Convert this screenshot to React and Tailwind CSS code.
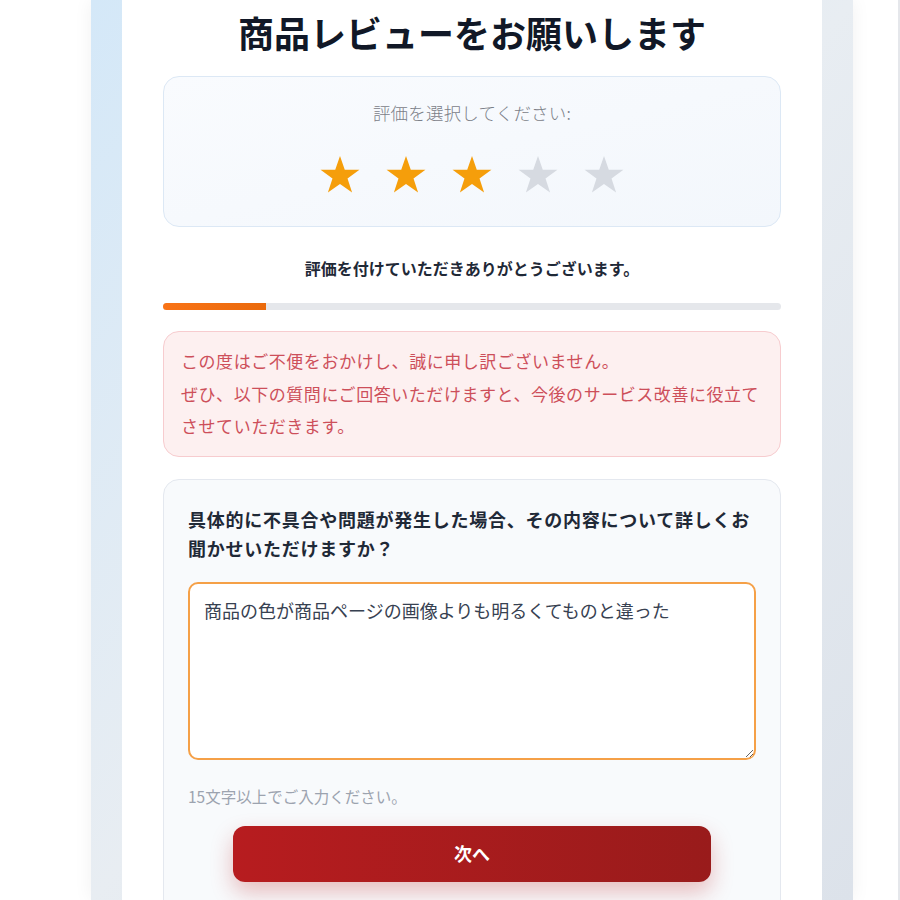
import React from "react";

const font = { fontFamily: '"Noto Sans CJK JP", "Noto Sans", sans-serif' };

function Star({ filled }) {
  return (
    <svg width="44" height="44" viewBox="0 0 24 24" aria-hidden="true">
      <polygon
        points="12,1.6 14.6,9.2 22.6,9.2 16.1,13.9 18.6,21.6 12,16.9 5.4,21.6 7.9,13.9 1.4,9.2 9.4,9.2"
        fill={filled ? "#f59e0b" : "#d6dae1"}
      />
    </svg>
  );
}

export default function App() {
  const rating = 3;
  return (
    <div className="flex h-[900px] overflow-hidden bg-white" style={font}>
      <div className="ml-[91px] w-[762px] shrink-0 bg-gradient-to-br from-[#d4e8f8] via-[#e8edf2] to-[#dce2ea] px-[31px] shadow-[0_0_18px_rgba(15,23,42,0.06)]">
        <div className="h-full bg-white px-[41px] pt-[10px]">
          <h1 className="text-center text-[36px] font-bold leading-[44px] text-[#111827]">
            商品レビューをお願いします
          </h1>

          <div className="mt-[22px] rounded-2xl border border-[#dce8f5] bg-gradient-to-br from-[#f9fbfe] to-[#f3f7fc] pt-[24px] pb-[29px]">
            <p className="text-center text-[17.5px] font-light leading-[24px] tracking-[0.2px] text-[#7b8088]">
              評価を選択してください:
            </p>
            <div className="mt-[28px] flex justify-center gap-[22px]">
              {[1, 2, 3, 4, 5].map((n) => (
                <Star key={n} filled={n <= rating} />
              ))}
            </div>
          </div>

          <p className="mt-[29px] text-center text-[16px] font-bold leading-[24px] text-[#1f2937]">
            評価を付けていただきありがとうございます。
          </p>

          <div className="mt-[23px] h-[7px] w-full overflow-hidden rounded-full bg-[#e5e7eb]">
            <div className="h-full bg-gradient-to-r from-[#f97316] to-[#ea6a0c]" style={{ width: "16.7%" }} />
          </div>

          <div className="mt-[21px] rounded-2xl border border-[#f7cccf] bg-[#fdf0f0] px-[17px] py-[13px] text-[17px] leading-[32.5px] tracking-[0.55px] text-[#cd4f5a]">
            <p>この度はご不便をおかけし、誠に申し訳ございません。</p>
            <p>ぜひ、以下の質問にご回答いただけますと、今後のサービス改善に役立てさせていただきます。</p>
          </div>

          <div className="mt-[22px] rounded-2xl border border-[#e4e8ef] bg-[#f8fafc] px-[24px] pt-[25px] pb-[40px]">
            <p className="text-[18px] font-bold leading-[29px] tracking-[0.75px] text-[#1f2937]">
              具体的に不具合や問題が発生した場合、その内容について詳しくお聞かせいただけますか？
            </p>
            <textarea
              className="mt-[19px] block h-[178px] w-full resize-y rounded-[10px] border-2 border-[#f5a047] bg-white px-[14px] py-[13px] text-[18px] leading-[27px] text-[#374151] outline-none"
              style={font}
              defaultValue="商品の色が商品ページの画像よりも明るくてものと違った"
            />
            <p className="mt-[24px] text-[15.5px] leading-[24px] text-[#9ca3af]">
              15文字以上でご入力ください。
            </p>
            <div className="mt-[18px] flex justify-center">
              <button className="h-[56px] w-[478px] rounded-xl bg-gradient-to-r from-[#b71c1f] to-[#991b1b] text-[18px] font-bold text-white shadow-[0_10px_22px_rgba(185,28,28,0.28)]">
                次へ
              </button>
            </div>
          </div>
        </div>
      </div>
      <div className="flex-1" />
      <div className="w-[2px] bg-[#e5e7eb]" />
    </div>
  );
}
